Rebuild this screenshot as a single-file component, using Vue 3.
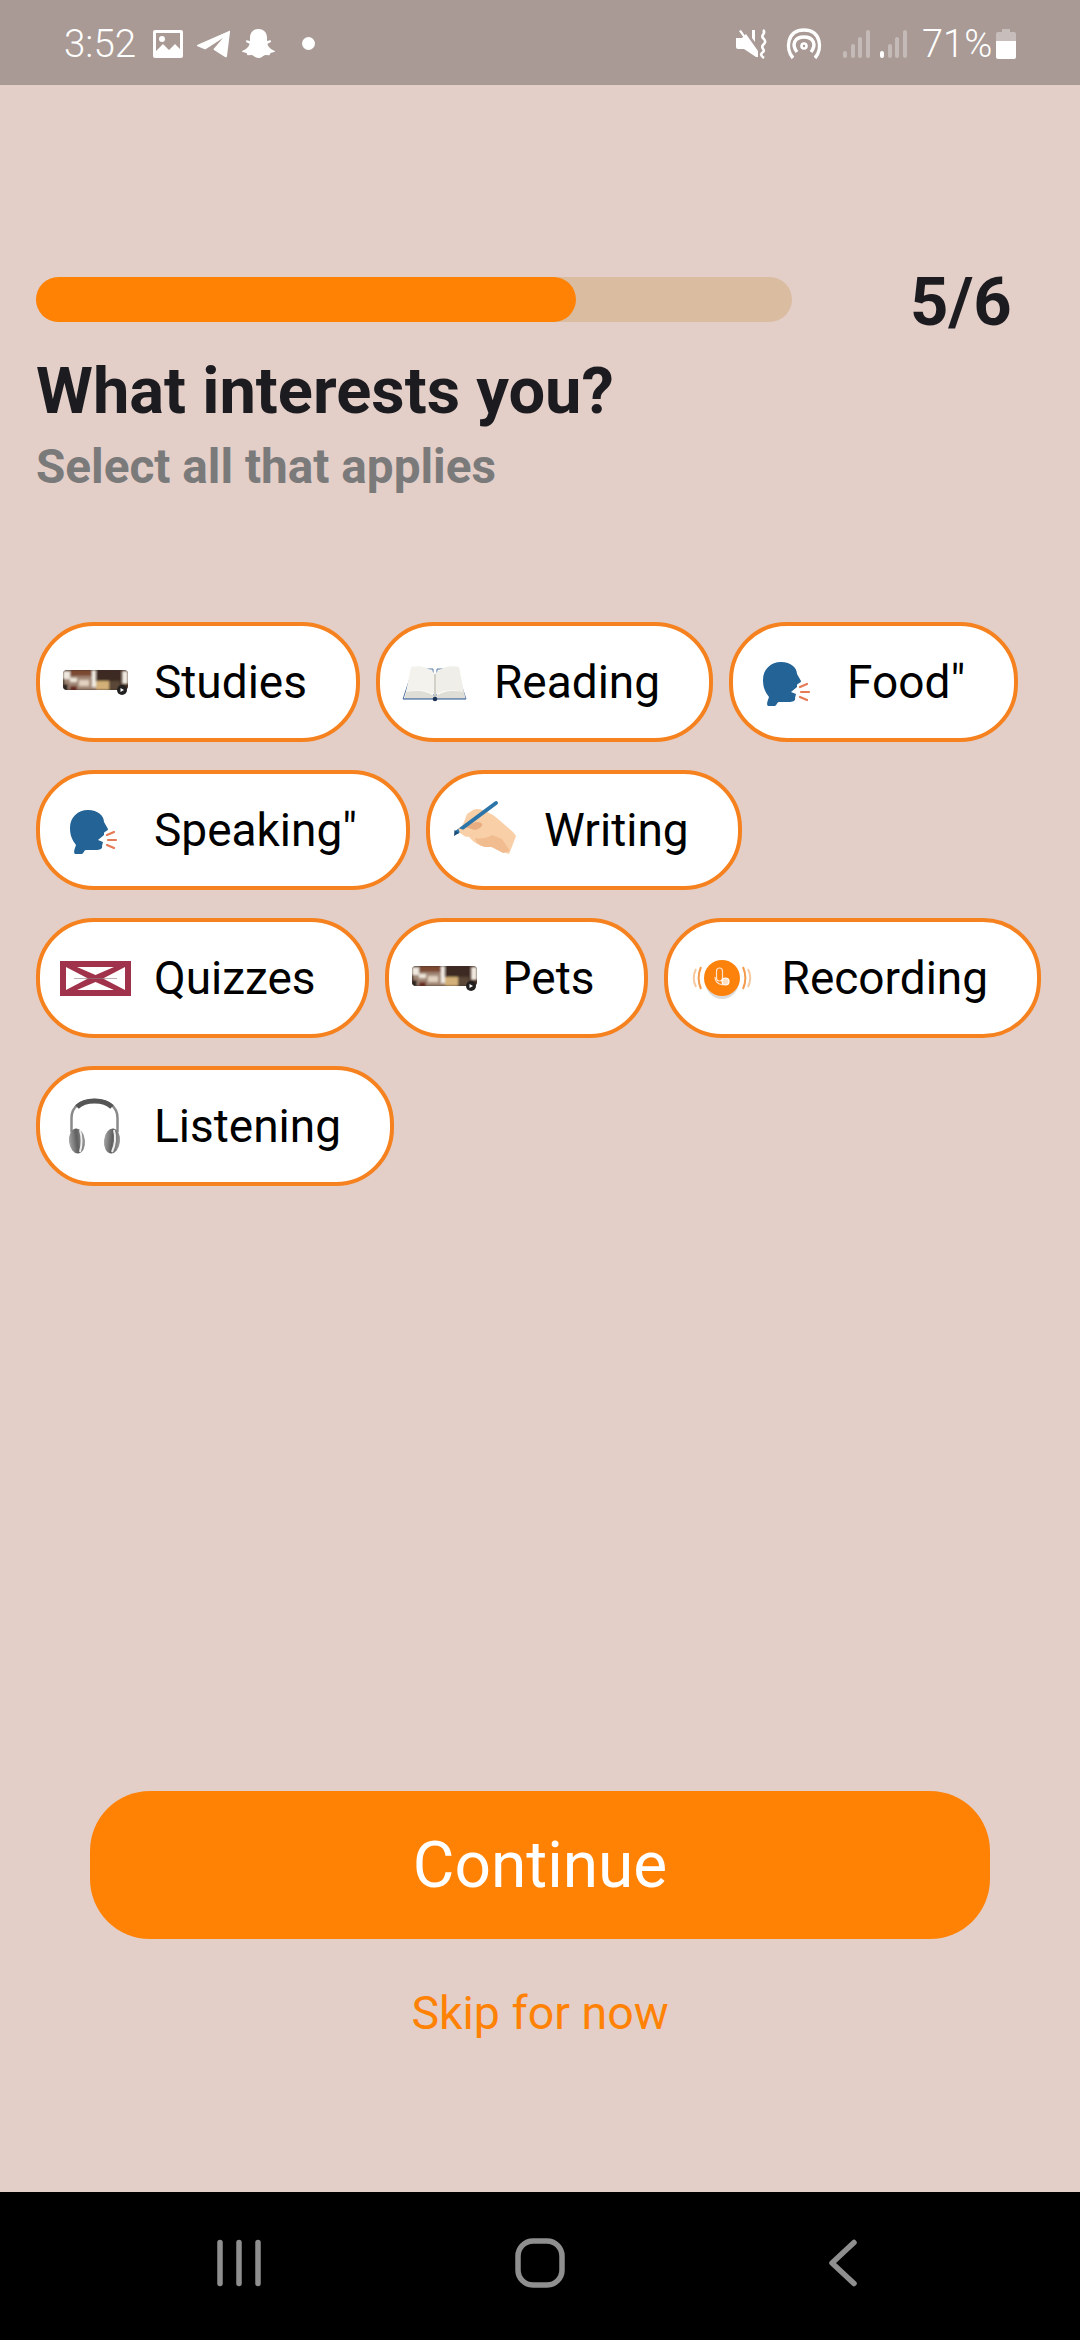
<script setup>
const chips = [
  { label: 'Studies', icon: 'photo' },
  { label: 'Reading', icon: 'book' },
  { label: 'Food"', icon: 'head' },
  { label: 'Speaking"', icon: 'head' },
  { label: 'Writing', icon: 'hand' },
  { label: 'Quizzes', icon: 'flag' },
  { label: 'Pets', icon: 'photo' },
  { label: 'Recording', icon: 'mic' },
  { label: 'Listening', icon: 'phones' },
]
</script>

<template>
  <div class="page">
    <header class="status">
      <div class="status-left">
        <span class="time">3:52</span>
        <svg class="si-image" width="30" height="28" viewBox="0 0 30 28">
          <path fill="#fff" fill-rule="evenodd" d="M2 0h26a2 2 0 0 1 2 2v24a2 2 0 0 1-2 2H2a2 2 0 0 1-2-2V2a2 2 0 0 1 2-2zM3 3v18l7-7 6 6 6-6 5 5V3z"/>
          <circle cx="9" cy="9" r="3" fill="#fff"/>
        </svg>
        <svg class="si-plane" width="33" height="28" viewBox="0 0 33 28">
          <path fill="#fff" d="M0 15 32 1c1-.4 1.200.2 1 1l-3 24c-.1 1.400-1 1.700-2 1l-11-7c-.6-.5-.6-1 0-1.600L26 8 9 19c-.6.300-1 .300-2 0l-6-2.500c-1-.5-1-1-1-1.500z"/>
        </svg>
        <svg class="si-ghost" width="33" height="30" viewBox="0 0 33 30">
          <path fill="#fff" d="M16.500 0c6 0 8.500 4.500 8.500 8.500v3.500l3-.8c1 0 1.500 1.300.5 2l-3 1.500c0 2.500 3.500 6 7 7 .8.300.6 1-.3 1.400l-3.700 1-1 2.100-4-.3c-2 .3-3.500 3-7 3s-5-2.700-7-3l-4 .3-1-2.100-3.700-1c-.9-.4-1.100-1.100-.3-1.400 3.500-1 7-4.500 7-7l-3-1.500c-1-.7-.5-2 .5-2l3 .8V8.500C8 4.500 10.500 0 16.500 0z"/>
        </svg>
        <span class="si-dot"></span>
      </div>
      <div class="status-right">
        <svg class="si-mute" width="32" height="30" viewBox="0 0 32 30">
          <path fill="#fff" d="M0 9h6L10 5l12 17v6h-2L8 20H2a2 2 0 0 1-2-2z"/>
          <path fill="#fff" d="M16 1h3v12l-3-4zM3 2l2-1 17 24-2 1z"/>
          <path fill="none" stroke="#fff" stroke-width="2.600" d="M27 1c4 3-3 5 0 8s3 4 0 7 3 5 0 7-2 4 1 6"/>
        </svg>
        <svg class="si-hot" width="36" height="32" viewBox="0 0 36 32">
          <g fill="none" stroke="#fff" stroke-width="3.400">
            <path d="M7 30C-1 21 1 2 18 2s19 19 11 28"/>
            <path d="M11 24C5 16 9 9 18 9s13 7 7 15"/>
          </g>
          <circle cx="18" cy="18" r="3.800" fill="#fff"/>
          <circle cx="18" cy="18" r="1.200" fill="#a99a95"/>
        </svg>
        <svg class="si-sig" width="27" height="28" viewBox="0 0 27 28">
          <g fill="#fff" fill-opacity=".32">
            <rect x="0" y="21" width="4" height="7" rx="2"/>
            <rect x="8" y="14" width="4" height="14" rx="2"/>
            <rect x="15" y="7" width="4" height="21" rx="2"/>
            <rect x="23" y="0" width="4" height="28" rx="2"/>
          </g>
        </svg>
        <svg class="si-sig2" width="27" height="28" viewBox="0 0 27 28">
          <rect x="0" y="21" width="4" height="7" rx="2" fill="#fff"/>
          <g fill="#fff" fill-opacity=".32">
            <rect x="8" y="14" width="4" height="14" rx="2"/>
            <rect x="15" y="7" width="4" height="21" rx="2"/>
            <rect x="23" y="0" width="4" height="28" rx="2"/>
          </g>
        </svg>
        <span class="pct">71%</span>
        <svg class="si-bat" width="20" height="30" viewBox="0 0 20 30">
          <path fill="#fff" fill-opacity=".35" d="M6 0h8v3h4a2 2 0 0 1 2 2v7H0V5a2 2 0 0 1 2-2h4z"/>
          <path fill="#fff" d="M0 12h20v16a2 2 0 0 1-2 2H2a2 2 0 0 1-2-2z"/>
        </svg>
      </div>
    </header>

    <main class="content">
      <div class="progress-row">
        <div class="track"><div class="fill"></div></div>
        <span class="count">5/6</span>
      </div>
      <h1 class="title">What interests you?</h1>
      <p class="sub">Select all that applies</p>

      <div class="chips">
        <div v-for="chip in chips" :key="chip.label" class="chip">
          <svg class="chip-icon" width="90" height="80" viewBox="0 0 90 80">
            <defs>
              <filter id="soft" x="-10%" y="-10%" width="120%" height="120%"><feGaussianBlur stdDeviation="0.7"/></filter>
              <filter id="softer" x="-10%" y="-10%" width="120%" height="120%"><feGaussianBlur stdDeviation="1"/></filter>
              <clipPath id="thumb"><rect x="7" y="28" width="65" height="20" rx="4"/></clipPath>
              <linearGradient id="cup" x1="0" x2="1" y1="0" y2="0"><stop offset="0" stop-color="#a5a5a5"/><stop offset=".5" stop-color="#5f5f5f"/><stop offset="1" stop-color="#9a9a9a"/></linearGradient>
            </defs>
            <g v-if="chip.icon === 'photo'">
              <g clip-path="url(#thumb)">
                <rect x="7" y="28" width="65" height="20" fill="#3f2a20"/>
                <g filter="url(#softer)">
                  <rect x="14" y="28" width="24" height="6" fill="#7b4a30"/>
                  <rect x="8" y="34" width="32" height="14" fill="#a08674"/>
                  <rect x="7" y="29" width="7" height="8" fill="#f0e9e0"/>
                  <rect x="7" y="42" width="5" height="6" fill="#2f2622"/>
                  <rect x="14" y="36" width="7" height="4" fill="#efe6da"/>
                  <rect x="23" y="38" width="10" height="6" fill="#e2d1bf"/>
                  <rect x="14" y="44" width="7" height="4" fill="#6a2f20"/>
                  <rect x="36" y="28" width="4" height="17" fill="#f2ece4"/>
                  <rect x="41" y="28" width="23" height="11" fill="#3c2b23"/>
                  <rect x="40" y="39" width="13" height="9" fill="#d3b077"/>
                  <rect x="53" y="39" width="11" height="9" fill="#5a4739"/>
                  <rect x="66" y="29" width="6" height="13" fill="#eee8de"/>
                </g>
              </g>
              <circle cx="66" cy="48" r="5" fill="#232020"/>
              <path d="M64.500 46l3.500 2-3.500 2z" fill="#fff"/>
            </g>
            <g v-else-if="chip.icon === 'book'">
              <path d="M7 57 17 27h20l1 30z" fill="#fbfaf5" stroke="#5a7ba8" stroke-width="1"/>
              <path d="M70 57 60 27H41l-1 30z" fill="#fbfaf5" stroke="#5a7ba8" stroke-width="1"/>
              <path d="M15 25c9-2 18 0 24 7v21c-7-5-17-6-29-3z" fill="#f3f2ed"/>
              <path d="M63 25c-9-2-18 0-24 7v21c7-5 17-6 29-3z" fill="#efeee8"/>
              <path d="M10 50c12-2 22-1 29 5 7-6 17-7 29-5l1.500 6.500H8.500z" fill="#dfded6"/>
              <path d="M39 32v23" stroke="#c8c7be" stroke-width="1.500"/>
              <path d="M7 56.800h63" stroke="#5a7ba8" stroke-width="1"/>
              <circle cx="39" cy="57" r="2.300" fill="#1d3557"/>
            </g>
            <g v-else-if="chip.icon === 'head'">
              <path fill="#236396" d="M32 20C42 20 48 26 48 32L52 39C52 41 49 41 48 43L48 45 42 50 47 52 46 56C47 59 43 60 40 60L30 60C28 60 28 63 26 64L19 64C17 62 19 58 20 55 16 50 14 45 14 38 14 27 22 20 32 20z"/>
              <g stroke="#e57b55" stroke-width="2.200" stroke-linecap="round">
                <path d="M51 45l7-3"/><path d="M52 50h8"/><path d="M51 55l7 3"/>
              </g>
            </g>
            <g v-else-if="chip.icon === 'hand'">
              <g filter="url(#soft)">
                <path fill="#f9cfa8" d="M27 20c3-2 8-1 12 1l8 4 5 4 15 13 3 4-3 8-4 10-9-3-11-5-8 0-7-4-5-5-10-6 2-3 3-6 3-8z"/>
                <path fill="#f1bc90" d="M29 48c5 1 10 1 17-3l10 4 8 12-7 2-11-6-8 0-7-4z"/>
                <path fill="#e8ad80" d="M19 37l8-4c4-2 8-1 9 1s-3 5-7 6z"/>
              </g>
              <path fill="none" stroke="#2c75a8" stroke-width="4" stroke-linecap="round" d="M11 42 50 13"/>
              <path fill="#1c4e78" d="M8 46l.5-6 4.500 3z"/>
              <path fill="#f9cfa8" d="M12 38l9 3 6 4-7 2-6-4z"/>
            </g>
            <g v-else-if="chip.icon === 'flag'">
              <rect x="4" y="23" width="71" height="35" fill="#a1324b"/>
              <path fill="#fff" d="M10 29v23l22-11.500zM69 29v23L47 40.500zM21 29h37L39.500 37zM21 52h37L39.500 44z"/>
              <path d="M18 40.500h43" stroke="#8a7d80" stroke-width="1" opacity=".6"/>
            </g>
            <g v-else-if="chip.icon === 'mic'">
              <ellipse cx="38" cy="43" rx="17" ry="18" fill="#000" opacity=".14"/>
              <circle cx="38" cy="40" r="18" fill="#fc820c"/>
              <g fill="none" stroke="#f39a4d" stroke-width="2">
                <path d="M17 29c-3 7-3 15 0 22"/>
                <path d="M59 29c3 7 3 15 0 22"/>
              </g>
              <g fill="none" stroke="#f7c9a0" stroke-width="2">
                <path d="M12 31c-3 6-3 12 0 18"/>
                <path d="M64 31c3 6 3 12 0 18"/>
              </g>
              <g fill="none" stroke="#fde3cb" stroke-width="1.200">
                <rect x="32.500" y="30" width="6" height="13" rx="3"/>
                <path d="M31 39c0 5 3 7 8 8"/>
              </g>
              <circle cx="41.500" cy="43.500" r="3.500" fill="#fde0c4" stroke="#fff" stroke-width="1.200"/>
            </g>
            <g v-else>
              <path fill="none" stroke="#8a8a8a" stroke-width="2.500" d="M15.500 46V32c0-12 10-18 23-18s23 6 23 18v14"/>
              <path fill="none" stroke="#555" stroke-width="5" d="M21 21c4-4 10-6 17.500-6s13.500 2 17.500 6"/>
              <ellipse cx="21" cy="55" rx="8" ry="12.500" transform="rotate(-6 21 55)" fill="url(#cup)"/>
              <path fill="none" stroke="#eee" stroke-width="2" d="M24 44c2 7 2 15 0 22"/>
              <ellipse cx="56" cy="55" rx="8" ry="12.500" transform="rotate(6 56 55)" fill="url(#cup)"/>
              <path fill="none" stroke="#eee" stroke-width="2" d="M58 44c2 7 1 15-2 22"/>
            </g>
          </svg>
          <span class="chip-label">{{ chip.label }}</span>
        </div>
      </div>

      <div class="actions">
        <div class="continue">Continue</div>
        <div class="skip">Skip for now</div>
      </div>
    </main>

    <footer class="nav">
      <svg class="nav-recents" width="44" height="48" viewBox="0 0 44 48">
        <g stroke="#8f8f8f" stroke-width="5.500" stroke-linecap="round">
          <path d="M3 3.500v41"/><path d="M22 3.500v41"/><path d="M41 3.500v41"/>
        </g>
      </svg>
      <svg class="nav-home" width="50" height="50" viewBox="0 0 50 50">
        <rect x="3" y="3" width="44" height="44" rx="15" fill="none" stroke="#8f8f8f" stroke-width="5.500"/>
      </svg>
      <svg class="nav-back" width="30" height="48" viewBox="0 0 30 48">
        <path d="M26 3.500 4 24l22 20.500" fill="none" stroke="#8f8f8f" stroke-width="5.500" stroke-linecap="round" stroke-linejoin="round"/>
      </svg>
    </footer>
  </div>
</template>

<style scoped>
.page {
  width: 1080px;
  height: 2340px;
  display: flex;
  flex-direction: column;
  background: #e4cec8;
  font-family: Roboto, "Liberation Sans", sans-serif;
  overflow: hidden;
}
.status {
  height: 85px;
  flex: none;
  background: #a99a95;
  display: flex;
  align-items: center;
  justify-content: space-between;
  color: #fff;
  box-sizing: border-box;
  padding: 2px 64px 0;
}
.status-left, .status-right {
  display: flex;
  align-items: center;
}
.time {
  font-size: 38.500px;
  font-weight: 300;
  line-height: 44px;
  width: 89px;
}
.si-plane { margin-left: 14px; }
.si-ghost { margin-left: 12px; }
.si-dot {
  width: 13px;
  height: 13px;
  border-radius: 50%;
  background: #fff;
  margin-left: 27px;
}
.si-hot { margin-left: 18px; }
.si-sig { margin-left: 21px; }
.si-sig2 { margin-left: 10px; }
.pct {
  font-size: 38px;
  font-weight: 300;
  line-height: 44px;
  margin-left: 15px;
  width: 74px;
}
.content {
  flex: 1;
  display: flex;
  flex-direction: column;
  padding-top: 192px;
  box-sizing: border-box;
  min-height: 0;
}
.progress-row {
  display: flex;
  align-items: center;
  padding-left: 36px;
  height: 45px;
}
.track {
  width: 756px;
  height: 45px;
  border-radius: 23px;
  background: #dabca0;
}
.fill {
  width: 540px;
  height: 45px;
  border-radius: 23px;
  background: #ff8205;
}
.count {
  margin-left: 118px;
  font-size: 67px;
  font-weight: 700;
  color: #1c1b1f;
  line-height: 70px;
  position: relative;
  top: 2px;
}
.title {
  margin: 31px 0 0 36px;
  font-size: 65px;
  line-height: 76px;
  font-weight: 700;
  color: #1c1b1f;
}
.sub {
  margin: 12px 0 0 36px;
  font-size: 47.700px;
  line-height: 52px;
  font-weight: 700;
  color: #7a7a7a;
}
.chips {
  display: flex;
  flex-wrap: wrap;
  column-gap: 16px;
  row-gap: 28px;
  padding: 0 20px 0 36px;
  margin-top: 129px;
}
.chip {
  display: flex;
  align-items: center;
  height: 120px;
  box-sizing: border-box;
  border: 4px solid #f5821f;
  border-radius: 58px;
  background: #fff;
  padding: 0 49px 0 16px;
}
.chip-icon {
  flex: none;
  margin-right: 8px;
}
.chip-label {
  font-size: 46px;
  line-height: 54px;
  color: #000;
  white-space: nowrap;
}
.actions {
  margin-top: auto;
  display: flex;
  flex-direction: column;
  align-items: center;
  padding-bottom: 152px;
}
.continue {
  width: 900px;
  height: 148px;
  border-radius: 60px;
  background: #ff8205;
  color: #fff;
  display: flex;
  align-items: center;
  justify-content: center;
  font-size: 64px;
}
.skip {
  margin-top: 47px;
  font-size: 46.500px;
  line-height: 54px;
  color: #ff8205;
}
.nav {
  height: 148px;
  flex: none;
  background: #000;
  display: flex;
  align-items: center;
  padding-bottom: 7px;
  box-sizing: border-box;
}
.nav-recents { margin-left: 217px; }
.nav-home { margin-left: 254px; }
.nav-back { margin-left: 263px; }
</style>
